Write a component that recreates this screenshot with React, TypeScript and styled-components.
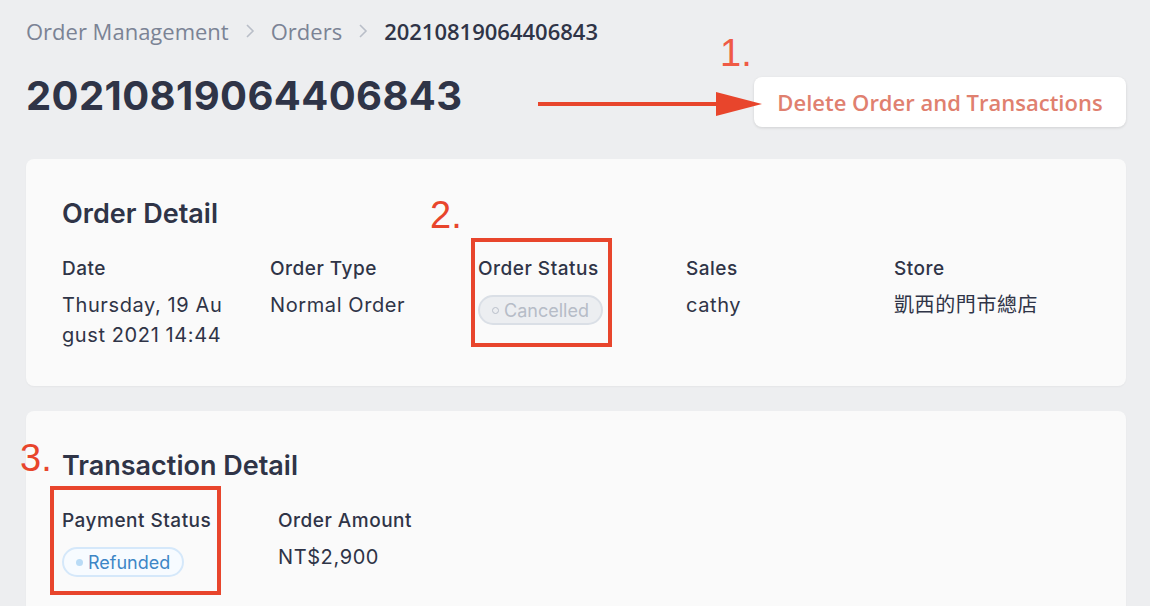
import React from "react";
import styled, { createGlobalStyle } from "styled-components";

const Global = createGlobalStyle`
  html, body { margin: 0; padding: 0; background: #edeef0; }
  body { font-family: Inter, "Noto Sans", sans-serif; color: #2f3447; }
  * { box-sizing: border-box; }
`;

const Page = styled.div`
  width: 1150px;
  height: 606px;
  overflow: hidden;
  padding: 17px 24px 0 26px;
  position: relative;
`;

const Breadcrumb = styled.nav`
  display: flex;
  align-items: center;
  gap: 16px;
  height: 28px;
  font-family: "Open Sans", "Noto Sans", sans-serif;
  font-size: 22px;
`;

const Crumb = styled.span<{ $current?: boolean }>`
  color: ${(p) => (p.$current ? "#2f3447" : "#7b8395")};
  font-weight: ${(p) => (p.$current ? 600 : 400)};
`;

const Sep = styled.span`
  display: inline-flex;
  color: #b9bec8;
`;

const HeaderRow = styled.div`
  position: relative;
  display: flex;
  justify-content: space-between;
  align-items: flex-start;
  margin-top: 27px;
  height: 60px;
`;

const Title = styled.h1`
  margin: 0;
  font-family: Inter, sans-serif;
  font-size: 40px;
  line-height: 48px;
  font-weight: 700;
  color: #2f3447;
  letter-spacing: 0.4px;
`;

const DangerButton = styled.button`
  margin-top: 5px;
  width: 372px;
  height: 50px;
  border: none;
  border-radius: 8px;
  background: #ffffff;
  box-shadow: 0 1px 3px rgba(0, 0, 0, 0.12);
  font-family: "Open Sans", "Noto Sans", sans-serif;
  font-size: 22px;
  font-weight: 600;
  color: #e0806f;
  cursor: pointer;
`;

const Arrow = styled.svg`
  position: absolute;
  left: 512px;
  top: 20px;
`;

const Mark = styled.span<{ $light?: boolean }>`
  position: absolute;
  font-family: "Liberation Sans", Arial, sans-serif;
  font-size: 38px;
  line-height: 1;
  font-weight: 400;
  color: ${(p) => (p.$light ? "#ef5a45" : "#e8452c")};
  white-space: nowrap;
`;

const Stack = styled.div`
  display: flex;
  flex-direction: column;
  gap: 25px;
  margin-top: 27px;
`;

const Card = styled.section`
  position: relative;
  background: #fafafa;
  border-radius: 8px;
  padding: 40px 36px 36px;
  box-shadow: 0 1px 2px rgba(0, 0, 0, 0.04);
`;

const CardTitle = styled.h2`
  position: relative;
  margin: 0;
  font-size: 27px;
  line-height: 30px;
  font-weight: 600;
  color: #2f3447;
`;

const Fields = styled.div<{ $col: number }>`
  display: grid;
  grid-template-columns: repeat(5, ${(p) => p.$col}px);
  margin-top: 27px;
`;

const Field = styled.div`
  position: relative;
  display: flex;
  flex-direction: column;
  align-items: flex-start;
  gap: 8px;
`;

const Label = styled.div`
  font-size: 19px;
  line-height: 26px;
  font-weight: 500;
  letter-spacing: 0.5px;
  color: #2f3447;
`;

const Value = styled.div<{ $width?: number }>`
  font-size: 20px;
  line-height: 30px;
  font-weight: 400;
  letter-spacing: 0.6px;
  color: #2f3447;
  ${(p) => (p.$width ? `width: ${p.$width}px; word-break: break-all;` : "")}
  font-family: Inter, "Noto Sans CJK TC", sans-serif;
`;

const Pill = styled.span<{ $tone: "grey" | "blue" }>`
  display: inline-flex;
  align-items: center;
  gap: 5px;
  height: 30px;
  padding: 0 12px 0 12px;
  border-radius: 15px;
  font-size: 18px;
  font-weight: 400;
  margin-top: 5px;
  background: ${(p) => (p.$tone === "grey" ? "#eceef1" : "#f7fbff")};
  border: 2px solid ${(p) => (p.$tone === "grey" ? "#dadfe6" : "#d5e8fa")};
  color: ${(p) => (p.$tone === "grey" ? "#b6bcc7" : "#3d86c6")};
`;

const Dot = styled.span<{ $tone: "grey" | "blue" }>`
  width: 7px;
  height: 7px;
  border-radius: 50%;
  ${(p) =>
    p.$tone === "grey"
      ? "border: 1px solid #b9bfca; background: transparent;"
      : "background: #b9dbf6;"}
`;

const Highlight = styled.div`
  position: absolute;
  border: 4px solid #e8452c;
  pointer-events: none;
`;

const ChevronRight = () => (
  <svg width="10" height="16" viewBox="0 0 10 16" fill="none">
    <path d="M2 2 L8 8 L2 14" stroke="currentColor" strokeWidth="1.6" />
  </svg>
);

export default function App() {
  return (
    <>
      <Global />
      <Page>
        <Breadcrumb>
          <Crumb>Order Management</Crumb>
          <Sep>
            <ChevronRight />
          </Sep>
          <Crumb>Orders</Crumb>
          <Sep>
            <ChevronRight />
          </Sep>
          <Crumb $current>20210819064406843</Crumb>
        </Breadcrumb>

        <HeaderRow>
          <Title>20210819064406843</Title>
          <Arrow width="226" height="24" viewBox="0 0 226 24">
            <line x1="0" y1="12" x2="190" y2="12" stroke="#e8452c" strokeWidth="4" />
            <polygon points="178,0 224,12 178,24" fill="#e8452c" />
          </Arrow>
          <Mark $light style={{ left: 694, top: -38 }}>1.</Mark>
          <DangerButton>Delete Order and Transactions</DangerButton>
        </HeaderRow>

        <Stack>
          <Card>
            <CardTitle>Order Detail</CardTitle>
            <Mark style={{ left: 404, top: 37 }}>2.</Mark>
            <Fields $col={208}>
              <Field>
                <Label>Date</Label>
                <Value $width={166}>Thursday, 19 August 2021 14:44</Value>
              </Field>
              <Field>
                <Label>Order Type</Label>
                <Value>Normal Order</Value>
              </Field>
              <Field>
                <Label>Order Status</Label>
                <Pill $tone="grey">
                  <Dot $tone="grey" />
                  Cancelled
                </Pill>
                <Highlight style={{ left: -7, top: -18, width: 141, height: 109 }} />
              </Field>
              <Field>
                <Label>Sales</Label>
                <Value>cathy</Value>
              </Field>
              <Field>
                <Label>Store</Label>
                <Value>凱西的門市總店</Value>
              </Field>
            </Fields>
          </Card>

          <Card>
            <Mark style={{ left: -6, top: 28 }}>3.</Mark>
            <CardTitle>Transaction Detail</CardTitle>
            <Fields $col={216}>
              <Field>
                <Label>Payment Status</Label>
                <Pill $tone="blue">
                  <Dot $tone="blue" />
                  Refunded
                </Pill>
                <Highlight style={{ left: -12, top: -22, width: 171, height: 109 }} />
              </Field>
              <Field>
                <Label>Order Amount</Label>
                <Value>NT$2,900</Value>
              </Field>
            </Fields>
          </Card>
        </Stack>
      </Page>
    </>
  );
}
